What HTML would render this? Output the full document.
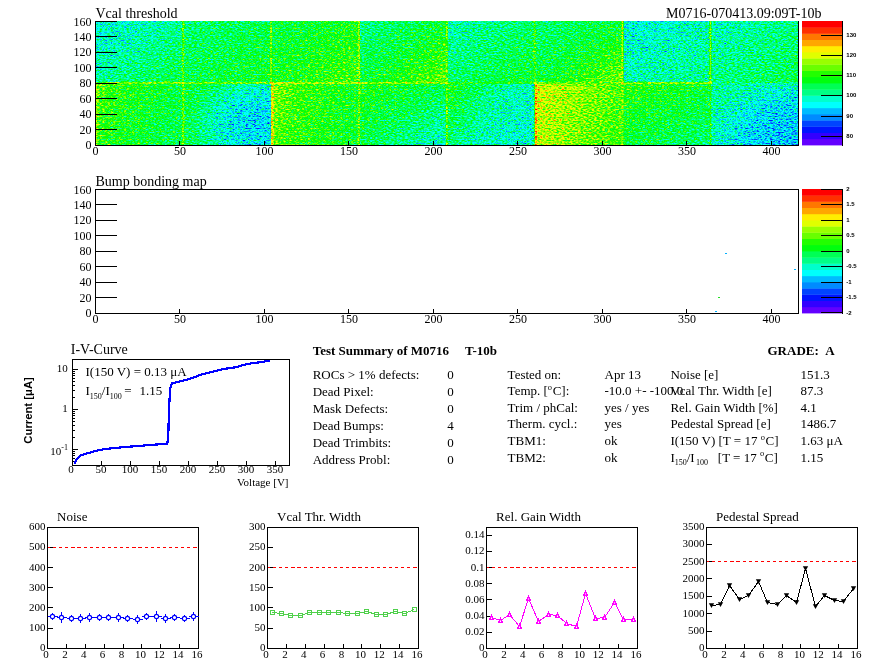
<!DOCTYPE html>
<html><head><meta charset="utf-8"><title>Module test summary</title>
<style>html,body{margin:0;padding:0;background:#fff;}body{width:896px;height:672px;overflow:hidden;font-family:"Liberation Serif", serif;}svg{display:block;opacity:0.999;}text{fill:#000;}</style>
</head><body>
<svg width="896" height="672" viewBox="0 0 896 672">
<rect x="0" y="0" width="896" height="672" fill="#fff"/>
<defs>
<filter id="hm" x="0" y="0" width="1" height="1" color-interpolation-filters="sRGB">
<feTurbulence type="fractalNoise" baseFrequency="0.37 0.74" numOctaves="1" seed="7" result="n"/>
<feColorMatrix in="n" type="matrix" values="1 0 0 0 0  1 0 0 0 0  1 0 0 0 0  0 0 0 0 1" result="ng"/>
<feComposite in="SourceGraphic" in2="ng" operator="arithmetic" k1="0" k2="1" k3="0.660" k4="-0.330" result="v"/>
<feComponentTransfer in="v" result="pal">
<feFuncR type="discrete" tableValues="0.387 0.200 0.000 0.000 0.000 0.000 0.000 0.000 0.000 0.000 0.000 0.133 0.413 0.600 0.880 1.000 1.000 1.000 1.000 1.000"/>
<feFuncG type="discrete" tableValues="0.000 0.000 0.080 0.267 0.547 0.733 1.000 1.000 1.000 1.000 1.000 1.000 1.000 1.000 1.000 0.933 0.653 0.467 0.187 0.000"/>
<feFuncB type="discrete" tableValues="1.000 1.000 1.000 1.000 1.000 1.000 0.987 0.800 0.520 0.333 0.053 0.000 0.000 0.000 0.000 0.000 0.000 0.000 0.000 0.000"/>
<feFuncA type="discrete" tableValues="1 1"/>
</feComponentTransfer>
<feGaussianBlur in="pal" stdDeviation="0.45 0.38" edgeMode="duplicate"/>
</filter>
</defs>
<defs>
<linearGradient id="gt0" x1="0" y1="0" x2="1" y2="1"><stop offset="0" stop-color="#5b5b5b"/><stop offset="0.35" stop-color="#636363"/><stop offset="1" stop-color="#808080"/></linearGradient>
<linearGradient id="gt1" x1="0" y1="0" x2="1" y2="1"><stop offset="0" stop-color="#6f6f6f"/><stop offset="1" stop-color="#868686"/></linearGradient>
<linearGradient id="gt2" x1="0" y1="0" x2="1" y2="1"><stop offset="0" stop-color="#7a7a7a"/><stop offset="1" stop-color="#969696"/></linearGradient>
<linearGradient id="gt3" x1="0" y1="0" x2="1" y2="1"><stop offset="0" stop-color="#6b6b6b"/><stop offset="0.5" stop-color="#808080"/><stop offset="1" stop-color="#9f9f9f"/></linearGradient>
<linearGradient id="gt4" x1="0" y1="0" x2="1" y2="1"><stop offset="0" stop-color="#636363"/><stop offset="1" stop-color="#848484"/></linearGradient>
<linearGradient id="gt5" x1="0" y1="0" x2="1" y2="1"><stop offset="0" stop-color="#6f6f6f"/><stop offset="0.5" stop-color="#808080"/><stop offset="1" stop-color="#a1a1a1"/></linearGradient>
<linearGradient id="gt6" x1="0" y1="0" x2="1" y2="1"><stop offset="0" stop-color="#585858"/><stop offset="1" stop-color="#6d6d6d"/></linearGradient>
<linearGradient id="gt7" x1="0" y1="0" x2="1" y2="1"><stop offset="0" stop-color="#5f5f5f"/><stop offset="1" stop-color="#7c7c7c"/></linearGradient>
<linearGradient id="gb0" x1="0" y1="0" x2="1" y2="0.3"><stop offset="0" stop-color="#9f9f9f"/><stop offset="0.25" stop-color="#8e8e8e"/><stop offset="1" stop-color="#7a7a7a"/></linearGradient>
<linearGradient id="gb1" x1="0" y1="0" x2="1" y2="0.3"><stop offset="0" stop-color="#828282"/><stop offset="0.5" stop-color="#737373"/><stop offset="1" stop-color="#636363"/></linearGradient>
<linearGradient id="gb2" x1="0" y1="0" x2="1" y2="0.2"><stop offset="0" stop-color="#a7a7a7"/><stop offset="0.35" stop-color="#929292"/><stop offset="1" stop-color="#848484"/></linearGradient>
<linearGradient id="gb3" x1="0" y1="0" x2="1" y2="1"><stop offset="0" stop-color="#8c8c8c"/><stop offset="0.5" stop-color="#7a7a7a"/><stop offset="1" stop-color="#5d5d5d"/></linearGradient>
<linearGradient id="gb4" x1="0" y1="0" x2="1" y2="0.45"><stop offset="0" stop-color="#8c8c8c"/><stop offset="0.3" stop-color="#777777"/><stop offset="0.6" stop-color="#656565"/><stop offset="1" stop-color="#5d5d5d"/></linearGradient>
<linearGradient id="gb5" x1="0" y1="0" x2="1" y2="0.2"><stop offset="0" stop-color="#bababa"/><stop offset="1" stop-color="#969696"/></linearGradient>
<linearGradient id="gb6" x1="0" y1="0" x2="1" y2="1"><stop offset="0" stop-color="#909090"/><stop offset="1" stop-color="#717171"/></linearGradient>
<linearGradient id="gb7" x1="0" y1="0" x2="1" y2="1"><stop offset="0" stop-color="#6b6b6b"/><stop offset="0.5" stop-color="#5f5f5f"/><stop offset="1" stop-color="#484848"/></linearGradient>
</defs>
<g filter="url(#hm)">
<rect x="95.50" y="21.00" width="703.00" height="124.00" fill="#757575"/>
<rect x="95.50" y="21.00" width="88.17" height="62.00" fill="url(#gt0)"/>
<rect x="95.50" y="83.00" width="88.17" height="62.00" fill="url(#gb0)"/>
<rect x="183.38" y="21.00" width="88.17" height="62.00" fill="url(#gt1)"/>
<rect x="183.38" y="83.00" width="88.17" height="62.00" fill="url(#gb1)"/>
<rect x="271.25" y="21.00" width="88.17" height="62.00" fill="url(#gt2)"/>
<rect x="271.25" y="83.00" width="88.17" height="62.00" fill="url(#gb2)"/>
<rect x="359.12" y="21.00" width="88.17" height="62.00" fill="url(#gt3)"/>
<rect x="359.12" y="83.00" width="88.17" height="62.00" fill="url(#gb3)"/>
<rect x="447.00" y="21.00" width="88.17" height="62.00" fill="url(#gt4)"/>
<rect x="447.00" y="83.00" width="88.17" height="62.00" fill="url(#gb4)"/>
<rect x="534.88" y="21.00" width="88.17" height="62.00" fill="url(#gt5)"/>
<rect x="534.88" y="83.00" width="88.17" height="62.00" fill="url(#gb5)"/>
<rect x="622.75" y="21.00" width="88.17" height="62.00" fill="url(#gt6)"/>
<rect x="622.75" y="83.00" width="88.17" height="62.00" fill="url(#gb6)"/>
<rect x="710.62" y="21.00" width="88.17" height="62.00" fill="url(#gt7)"/>
<rect x="710.62" y="83.00" width="88.17" height="62.00" fill="url(#gb7)"/>
<radialGradient id="bl1" cx="0.80" cy="0.62" r="0.74"><stop offset="0" stop-color="#484848" stop-opacity="0.88"/><stop offset="0.5" stop-color="#484848" stop-opacity="0.55"/><stop offset="1" stop-color="#484848" stop-opacity="0"/></radialGradient>
<radialGradient id="bl2" cx="0.78" cy="0.72" r="0.72"><stop offset="0" stop-color="#464646" stop-opacity="0.88"/><stop offset="0.5" stop-color="#464646" stop-opacity="0.5"/><stop offset="1" stop-color="#464646" stop-opacity="0"/></radialGradient>
<rect x="183.38" y="83.00" width="87.88" height="62.00" fill="url(#bl1)"/>
<rect x="710.62" y="83.00" width="87.88" height="62.00" fill="url(#bl2)"/>
<rect x="95.30" y="83.00" width="2.0" height="62.00" fill="#ababab"/>
<rect x="182.18" y="21.00" width="2.0" height="62.00" fill="#9b9b9b"/>
<rect x="182.18" y="83.00" width="2.0" height="62.00" fill="#9f9f9f"/>
<rect x="270.05" y="21.00" width="2.0" height="62.00" fill="#9f9f9f"/>
<rect x="271.05" y="83.00" width="2.6" height="62.00" fill="#c2c2c2"/>
<rect x="357.93" y="21.00" width="2.0" height="62.00" fill="#a7a7a7"/>
<rect x="357.93" y="83.00" width="2.0" height="62.00" fill="#9f9f9f"/>
<rect x="445.80" y="21.00" width="2.0" height="62.00" fill="#9f9f9f"/>
<rect x="445.80" y="83.00" width="2.0" height="62.00" fill="#9f9f9f"/>
<rect x="533.67" y="21.00" width="2.0" height="62.00" fill="#969696"/>
<rect x="534.67" y="83.00" width="2.6" height="62.00" fill="#d0d0d0"/>
<rect x="621.55" y="21.00" width="2.0" height="62.00" fill="#afafaf"/>
<rect x="621.55" y="83.00" width="2.0" height="62.00" fill="#a3a3a3"/>
<rect x="709.42" y="21.00" width="2.0" height="62.00" fill="#a3a3a3"/>
<rect x="709.42" y="83.00" width="2.0" height="62.00" fill="#909090"/>
<rect x="95.50" y="82.10" width="87.88" height="1.7" fill="#a9a9a9"/>
<rect x="183.38" y="82.10" width="87.88" height="1.7" fill="#a5a5a5"/>
<rect x="271.25" y="82.10" width="87.88" height="1.7" fill="#b3b3b3"/>
<rect x="359.12" y="82.10" width="87.88" height="1.7" fill="#ababab"/>
<rect x="447.00" y="82.10" width="87.88" height="1.7" fill="#909090"/>
<rect x="534.88" y="82.10" width="87.88" height="1.7" fill="#9b9b9b"/>
<rect x="622.75" y="82.10" width="87.88" height="1.7" fill="#ababab"/>
<rect x="181.88" y="81.80" width="3" height="2.2" fill="#bcbcbc"/>
<rect x="269.75" y="81.80" width="3" height="2.2" fill="#bcbcbc"/>
<rect x="357.62" y="81.80" width="3" height="2.2" fill="#bcbcbc"/>
<rect x="445.50" y="81.80" width="3" height="2.2" fill="#bcbcbc"/>
<rect x="533.38" y="81.80" width="3" height="2.2" fill="#bcbcbc"/>
<rect x="621.25" y="81.80" width="3" height="2.2" fill="#bcbcbc"/>
<rect x="709.12" y="81.80" width="3" height="2.2" fill="#b3b3b3"/>
</g>
<g shape-rendering="crispEdges">
<line x1="95.50" y1="20.50" x2="95.50" y2="145.50" stroke="#000" stroke-width="1" />
<line x1="95.00" y1="145.50" x2="799.00" y2="145.50" stroke="#000" stroke-width="1" />
<line x1="798.50" y1="21.00" x2="798.50" y2="145.50" stroke="#000" stroke-width="1" />
<line x1="95.00" y1="129.50" x2="117.00" y2="129.50" stroke="#000" stroke-width="1" />
<line x1="95.00" y1="114.50" x2="117.00" y2="114.50" stroke="#000" stroke-width="1" />
<line x1="95.00" y1="98.50" x2="117.00" y2="98.50" stroke="#000" stroke-width="1" />
<line x1="95.00" y1="83.50" x2="117.00" y2="83.50" stroke="#000" stroke-width="1" />
<line x1="95.00" y1="67.50" x2="117.00" y2="67.50" stroke="#000" stroke-width="1" />
<line x1="95.00" y1="52.50" x2="117.00" y2="52.50" stroke="#000" stroke-width="1" />
<line x1="95.00" y1="36.50" x2="117.00" y2="36.50" stroke="#000" stroke-width="1" />
<line x1="95.00" y1="21.50" x2="117.00" y2="21.50" stroke="#000" stroke-width="1" />
<line x1="179.50" y1="141.00" x2="179.50" y2="145.00" stroke="#000" stroke-width="1" />
<line x1="264.50" y1="141.00" x2="264.50" y2="145.00" stroke="#000" stroke-width="1" />
<line x1="348.50" y1="141.00" x2="348.50" y2="145.00" stroke="#000" stroke-width="1" />
<line x1="433.50" y1="141.00" x2="433.50" y2="145.00" stroke="#000" stroke-width="1" />
<line x1="517.50" y1="141.00" x2="517.50" y2="145.00" stroke="#000" stroke-width="1" />
<line x1="602.50" y1="141.00" x2="602.50" y2="145.00" stroke="#000" stroke-width="1" />
<line x1="686.50" y1="141.00" x2="686.50" y2="145.00" stroke="#000" stroke-width="1" />
<line x1="771.50" y1="141.00" x2="771.50" y2="145.00" stroke="#000" stroke-width="1" />
</g>
<text x="91.50" y="149.30" font-size="12" text-anchor="end" font-family='"Liberation Serif", serif' font-weight="normal" >0</text>
<text x="91.50" y="133.80" font-size="12" text-anchor="end" font-family='"Liberation Serif", serif' font-weight="normal" >20</text>
<text x="91.50" y="118.30" font-size="12" text-anchor="end" font-family='"Liberation Serif", serif' font-weight="normal" >40</text>
<text x="91.50" y="102.80" font-size="12" text-anchor="end" font-family='"Liberation Serif", serif' font-weight="normal" >60</text>
<text x="91.50" y="87.30" font-size="12" text-anchor="end" font-family='"Liberation Serif", serif' font-weight="normal" >80</text>
<text x="91.50" y="71.80" font-size="12" text-anchor="end" font-family='"Liberation Serif", serif' font-weight="normal" >100</text>
<text x="91.50" y="56.30" font-size="12" text-anchor="end" font-family='"Liberation Serif", serif' font-weight="normal" >120</text>
<text x="91.50" y="40.80" font-size="12" text-anchor="end" font-family='"Liberation Serif", serif' font-weight="normal" >140</text>
<text x="91.50" y="26.10" font-size="12" text-anchor="end" font-family='"Liberation Serif", serif' font-weight="normal" >160</text>
<text x="95.50" y="154.50" font-size="12" text-anchor="middle" font-family='"Liberation Serif", serif' font-weight="normal" >0</text>
<text x="180.00" y="154.50" font-size="12" text-anchor="middle" font-family='"Liberation Serif", serif' font-weight="normal" >50</text>
<text x="264.49" y="154.50" font-size="12" text-anchor="middle" font-family='"Liberation Serif", serif' font-weight="normal" >100</text>
<text x="348.99" y="154.50" font-size="12" text-anchor="middle" font-family='"Liberation Serif", serif' font-weight="normal" >150</text>
<text x="433.48" y="154.50" font-size="12" text-anchor="middle" font-family='"Liberation Serif", serif' font-weight="normal" >200</text>
<text x="517.98" y="154.50" font-size="12" text-anchor="middle" font-family='"Liberation Serif", serif' font-weight="normal" >250</text>
<text x="602.47" y="154.50" font-size="12" text-anchor="middle" font-family='"Liberation Serif", serif' font-weight="normal" >300</text>
<text x="686.97" y="154.50" font-size="12" text-anchor="middle" font-family='"Liberation Serif", serif' font-weight="normal" >350</text>
<text x="771.46" y="154.50" font-size="12" text-anchor="middle" font-family='"Liberation Serif", serif' font-weight="normal" >400</text>
<text x="95.50" y="17.70" font-size="14" text-anchor="start" font-family='"Liberation Serif", serif' font-weight="normal" >Vcal threshold</text>
<text x="821.50" y="17.70" font-size="14" text-anchor="end" font-family='"Liberation Serif", serif' font-weight="normal" >M0716-070413.09:09T-10b</text>
<rect x="802.00" y="138.80" width="40.00" height="6.60" fill="#6300ff"/>
<rect x="802.00" y="132.60" width="40.00" height="6.60" fill="#3300ff"/>
<rect x="802.00" y="126.40" width="40.00" height="6.60" fill="#0014ff"/>
<rect x="802.00" y="120.20" width="40.00" height="6.60" fill="#0044ff"/>
<rect x="802.00" y="114.00" width="40.00" height="6.60" fill="#008bff"/>
<rect x="802.00" y="107.80" width="40.00" height="6.60" fill="#00bbff"/>
<rect x="802.00" y="101.60" width="40.00" height="6.60" fill="#00fffc"/>
<rect x="802.00" y="95.40" width="40.00" height="6.60" fill="#00ffcc"/>
<rect x="802.00" y="89.20" width="40.00" height="6.60" fill="#00ff85"/>
<rect x="802.00" y="83.00" width="40.00" height="6.60" fill="#00ff55"/>
<rect x="802.00" y="76.80" width="40.00" height="6.60" fill="#00ff0e"/>
<rect x="802.00" y="70.60" width="40.00" height="6.60" fill="#22ff00"/>
<rect x="802.00" y="64.40" width="40.00" height="6.60" fill="#69ff00"/>
<rect x="802.00" y="58.20" width="40.00" height="6.60" fill="#99ff00"/>
<rect x="802.00" y="52.00" width="40.00" height="6.60" fill="#e0ff00"/>
<rect x="802.00" y="45.80" width="40.00" height="6.60" fill="#ffee00"/>
<rect x="802.00" y="39.60" width="40.00" height="6.60" fill="#ffa700"/>
<rect x="802.00" y="33.40" width="40.00" height="6.60" fill="#ff7700"/>
<rect x="802.00" y="27.20" width="40.00" height="6.60" fill="#ff3000"/>
<rect x="802.00" y="21.00" width="40.00" height="6.60" fill="#ff0000"/>
<g shape-rendering="crispEdges">
<line x1="842.50" y1="21.00" x2="842.50" y2="145.50" stroke="#000" stroke-width="1" />
<line x1="821.00" y1="136.50" x2="843.00" y2="136.50" stroke="#000" stroke-width="1" />
<line x1="821.00" y1="116.50" x2="843.00" y2="116.50" stroke="#000" stroke-width="1" />
<line x1="821.00" y1="95.50" x2="843.00" y2="95.50" stroke="#000" stroke-width="1" />
<line x1="821.00" y1="75.50" x2="843.00" y2="75.50" stroke="#000" stroke-width="1" />
<line x1="821.00" y1="55.50" x2="843.00" y2="55.50" stroke="#000" stroke-width="1" />
<line x1="821.00" y1="35.50" x2="843.00" y2="35.50" stroke="#000" stroke-width="1" />
</g>
<text x="846.30" y="137.66" font-size="6" text-anchor="start" font-family='"Liberation Sans", sans-serif' font-weight="bold" >80</text>
<text x="846.30" y="117.56" font-size="6" text-anchor="start" font-family='"Liberation Sans", sans-serif' font-weight="bold" >90</text>
<text x="846.30" y="97.46" font-size="6" text-anchor="start" font-family='"Liberation Sans", sans-serif' font-weight="bold" >100</text>
<text x="846.30" y="77.37" font-size="6" text-anchor="start" font-family='"Liberation Sans", sans-serif' font-weight="bold" >110</text>
<text x="846.30" y="57.27" font-size="6" text-anchor="start" font-family='"Liberation Sans", sans-serif' font-weight="bold" >120</text>
<text x="846.30" y="37.17" font-size="6" text-anchor="start" font-family='"Liberation Sans", sans-serif' font-weight="bold" >130</text>
<g shape-rendering="crispEdges">
<rect x="95.5" y="189.5" width="703" height="124" fill="none" stroke="#000" stroke-width="1"/>
<line x1="95.00" y1="297.50" x2="117.00" y2="297.50" stroke="#000" stroke-width="1" />
<line x1="95.00" y1="282.50" x2="117.00" y2="282.50" stroke="#000" stroke-width="1" />
<line x1="95.00" y1="266.50" x2="117.00" y2="266.50" stroke="#000" stroke-width="1" />
<line x1="95.00" y1="251.50" x2="117.00" y2="251.50" stroke="#000" stroke-width="1" />
<line x1="95.00" y1="235.50" x2="117.00" y2="235.50" stroke="#000" stroke-width="1" />
<line x1="95.00" y1="220.50" x2="117.00" y2="220.50" stroke="#000" stroke-width="1" />
<line x1="95.00" y1="204.50" x2="117.00" y2="204.50" stroke="#000" stroke-width="1" />
<line x1="179.50" y1="309.00" x2="179.50" y2="313.00" stroke="#000" stroke-width="1" />
<line x1="264.50" y1="309.00" x2="264.50" y2="313.00" stroke="#000" stroke-width="1" />
<line x1="348.50" y1="309.00" x2="348.50" y2="313.00" stroke="#000" stroke-width="1" />
<line x1="433.50" y1="309.00" x2="433.50" y2="313.00" stroke="#000" stroke-width="1" />
<line x1="517.50" y1="309.00" x2="517.50" y2="313.00" stroke="#000" stroke-width="1" />
<line x1="602.50" y1="309.00" x2="602.50" y2="313.00" stroke="#000" stroke-width="1" />
<line x1="686.50" y1="309.00" x2="686.50" y2="313.00" stroke="#000" stroke-width="1" />
<line x1="771.50" y1="309.00" x2="771.50" y2="313.00" stroke="#000" stroke-width="1" />
</g>
<text x="91.50" y="317.30" font-size="12" text-anchor="end" font-family='"Liberation Serif", serif' font-weight="normal" >0</text>
<text x="91.50" y="301.80" font-size="12" text-anchor="end" font-family='"Liberation Serif", serif' font-weight="normal" >20</text>
<text x="91.50" y="286.30" font-size="12" text-anchor="end" font-family='"Liberation Serif", serif' font-weight="normal" >40</text>
<text x="91.50" y="270.80" font-size="12" text-anchor="end" font-family='"Liberation Serif", serif' font-weight="normal" >60</text>
<text x="91.50" y="255.30" font-size="12" text-anchor="end" font-family='"Liberation Serif", serif' font-weight="normal" >80</text>
<text x="91.50" y="239.80" font-size="12" text-anchor="end" font-family='"Liberation Serif", serif' font-weight="normal" >100</text>
<text x="91.50" y="224.30" font-size="12" text-anchor="end" font-family='"Liberation Serif", serif' font-weight="normal" >120</text>
<text x="91.50" y="208.80" font-size="12" text-anchor="end" font-family='"Liberation Serif", serif' font-weight="normal" >140</text>
<text x="91.50" y="194.10" font-size="12" text-anchor="end" font-family='"Liberation Serif", serif' font-weight="normal" >160</text>
<text x="95.50" y="322.60" font-size="12" text-anchor="middle" font-family='"Liberation Serif", serif' font-weight="normal" >0</text>
<text x="180.00" y="322.60" font-size="12" text-anchor="middle" font-family='"Liberation Serif", serif' font-weight="normal" >50</text>
<text x="264.49" y="322.60" font-size="12" text-anchor="middle" font-family='"Liberation Serif", serif' font-weight="normal" >100</text>
<text x="348.99" y="322.60" font-size="12" text-anchor="middle" font-family='"Liberation Serif", serif' font-weight="normal" >150</text>
<text x="433.48" y="322.60" font-size="12" text-anchor="middle" font-family='"Liberation Serif", serif' font-weight="normal" >200</text>
<text x="517.98" y="322.60" font-size="12" text-anchor="middle" font-family='"Liberation Serif", serif' font-weight="normal" >250</text>
<text x="602.47" y="322.60" font-size="12" text-anchor="middle" font-family='"Liberation Serif", serif' font-weight="normal" >300</text>
<text x="686.97" y="322.60" font-size="12" text-anchor="middle" font-family='"Liberation Serif", serif' font-weight="normal" >350</text>
<text x="771.46" y="322.60" font-size="12" text-anchor="middle" font-family='"Liberation Serif", serif' font-weight="normal" >400</text>
<text x="95.50" y="185.70" font-size="14" text-anchor="start" font-family='"Liberation Serif", serif' font-weight="normal" >Bump bonding map</text>
<g shape-rendering="crispEdges">
<rect x="725" y="253" width="2" height="1" fill="#00b0ff"/>
<rect x="794" y="269" width="2" height="1" fill="#00b0ff"/>
<rect x="718" y="297" width="2" height="1" fill="#22e022"/>
<rect x="715" y="311" width="2" height="1" fill="#00b0ff"/>
</g>
<rect x="802.00" y="306.80" width="40.00" height="6.60" fill="#6300ff"/>
<rect x="802.00" y="300.60" width="40.00" height="6.60" fill="#3300ff"/>
<rect x="802.00" y="294.40" width="40.00" height="6.60" fill="#0014ff"/>
<rect x="802.00" y="288.20" width="40.00" height="6.60" fill="#0044ff"/>
<rect x="802.00" y="282.00" width="40.00" height="6.60" fill="#008bff"/>
<rect x="802.00" y="275.80" width="40.00" height="6.60" fill="#00bbff"/>
<rect x="802.00" y="269.60" width="40.00" height="6.60" fill="#00fffc"/>
<rect x="802.00" y="263.40" width="40.00" height="6.60" fill="#00ffcc"/>
<rect x="802.00" y="257.20" width="40.00" height="6.60" fill="#00ff85"/>
<rect x="802.00" y="251.00" width="40.00" height="6.60" fill="#00ff55"/>
<rect x="802.00" y="244.80" width="40.00" height="6.60" fill="#00ff0e"/>
<rect x="802.00" y="238.60" width="40.00" height="6.60" fill="#22ff00"/>
<rect x="802.00" y="232.40" width="40.00" height="6.60" fill="#69ff00"/>
<rect x="802.00" y="226.20" width="40.00" height="6.60" fill="#99ff00"/>
<rect x="802.00" y="220.00" width="40.00" height="6.60" fill="#e0ff00"/>
<rect x="802.00" y="213.80" width="40.00" height="6.60" fill="#ffee00"/>
<rect x="802.00" y="207.60" width="40.00" height="6.60" fill="#ffa700"/>
<rect x="802.00" y="201.40" width="40.00" height="6.60" fill="#ff7700"/>
<rect x="802.00" y="195.20" width="40.00" height="6.60" fill="#ff3000"/>
<rect x="802.00" y="189.00" width="40.00" height="6.60" fill="#ff0000"/>
<g shape-rendering="crispEdges">
<line x1="842.50" y1="189.00" x2="842.50" y2="313.50" stroke="#000" stroke-width="1" />
<line x1="821.00" y1="312.50" x2="843.00" y2="312.50" stroke="#000" stroke-width="1" />
<line x1="821.00" y1="297.50" x2="843.00" y2="297.50" stroke="#000" stroke-width="1" />
<line x1="821.00" y1="282.50" x2="843.00" y2="282.50" stroke="#000" stroke-width="1" />
<line x1="821.00" y1="266.50" x2="843.00" y2="266.50" stroke="#000" stroke-width="1" />
<line x1="821.00" y1="251.50" x2="843.00" y2="251.50" stroke="#000" stroke-width="1" />
<line x1="821.00" y1="235.50" x2="843.00" y2="235.50" stroke="#000" stroke-width="1" />
<line x1="821.00" y1="220.50" x2="843.00" y2="220.50" stroke="#000" stroke-width="1" />
<line x1="821.00" y1="204.50" x2="843.00" y2="204.50" stroke="#000" stroke-width="1" />
<line x1="821.00" y1="189.50" x2="843.00" y2="189.50" stroke="#000" stroke-width="1" />
</g>
<text x="846.30" y="314.50" font-size="6" text-anchor="start" font-family='"Liberation Sans", sans-serif' font-weight="bold" >-2</text>
<text x="846.30" y="299.00" font-size="6" text-anchor="start" font-family='"Liberation Sans", sans-serif' font-weight="bold" >-1.5</text>
<text x="846.30" y="283.50" font-size="6" text-anchor="start" font-family='"Liberation Sans", sans-serif' font-weight="bold" >-1</text>
<text x="846.30" y="268.00" font-size="6" text-anchor="start" font-family='"Liberation Sans", sans-serif' font-weight="bold" >-0.5</text>
<text x="846.30" y="252.50" font-size="6" text-anchor="start" font-family='"Liberation Sans", sans-serif' font-weight="bold" >0</text>
<text x="846.30" y="237.00" font-size="6" text-anchor="start" font-family='"Liberation Sans", sans-serif' font-weight="bold" >0.5</text>
<text x="846.30" y="221.50" font-size="6" text-anchor="start" font-family='"Liberation Sans", sans-serif' font-weight="bold" >1</text>
<text x="846.30" y="206.00" font-size="6" text-anchor="start" font-family='"Liberation Sans", sans-serif' font-weight="bold" >1.5</text>
<text x="846.30" y="190.50" font-size="6" text-anchor="start" font-family='"Liberation Sans", sans-serif' font-weight="bold" >2</text>
<g shape-rendering="crispEdges">
<rect x="72.5" y="359.5" width="217.0" height="106.0" fill="none" stroke="#000"/>
<line x1="72.00" y1="461.50" x2="75.00" y2="461.50" stroke="#000" stroke-width="1" />
<line x1="72.00" y1="458.50" x2="75.00" y2="458.50" stroke="#000" stroke-width="1" />
<line x1="72.00" y1="455.50" x2="75.00" y2="455.50" stroke="#000" stroke-width="1" />
<line x1="72.00" y1="453.50" x2="75.00" y2="453.50" stroke="#000" stroke-width="1" />
<line x1="72.00" y1="451.50" x2="75.00" y2="451.50" stroke="#000" stroke-width="1" />
<line x1="72.00" y1="449.50" x2="78.00" y2="449.50" stroke="#000" stroke-width="1" />
<line x1="72.00" y1="437.50" x2="75.00" y2="437.50" stroke="#000" stroke-width="1" />
<line x1="72.00" y1="430.50" x2="75.00" y2="430.50" stroke="#000" stroke-width="1" />
<line x1="72.00" y1="425.50" x2="75.00" y2="425.50" stroke="#000" stroke-width="1" />
<line x1="72.00" y1="421.50" x2="75.00" y2="421.50" stroke="#000" stroke-width="1" />
<line x1="72.00" y1="418.50" x2="75.00" y2="418.50" stroke="#000" stroke-width="1" />
<line x1="72.00" y1="415.50" x2="75.00" y2="415.50" stroke="#000" stroke-width="1" />
<line x1="72.00" y1="413.50" x2="75.00" y2="413.50" stroke="#000" stroke-width="1" />
<line x1="72.00" y1="411.50" x2="75.00" y2="411.50" stroke="#000" stroke-width="1" />
<line x1="72.00" y1="409.50" x2="78.00" y2="409.50" stroke="#000" stroke-width="1" />
<line x1="72.00" y1="397.50" x2="75.00" y2="397.50" stroke="#000" stroke-width="1" />
<line x1="72.00" y1="390.50" x2="75.00" y2="390.50" stroke="#000" stroke-width="1" />
<line x1="72.00" y1="385.50" x2="75.00" y2="385.50" stroke="#000" stroke-width="1" />
<line x1="72.00" y1="381.50" x2="75.00" y2="381.50" stroke="#000" stroke-width="1" />
<line x1="72.00" y1="378.50" x2="75.00" y2="378.50" stroke="#000" stroke-width="1" />
<line x1="72.00" y1="375.50" x2="75.00" y2="375.50" stroke="#000" stroke-width="1" />
<line x1="72.00" y1="373.50" x2="75.00" y2="373.50" stroke="#000" stroke-width="1" />
<line x1="72.00" y1="371.50" x2="75.00" y2="371.50" stroke="#000" stroke-width="1" />
<line x1="72.00" y1="369.50" x2="78.00" y2="369.50" stroke="#000" stroke-width="1" />
<line x1="101.50" y1="461.00" x2="101.50" y2="465.00" stroke="#000" stroke-width="1" />
<line x1="130.50" y1="461.00" x2="130.50" y2="465.00" stroke="#000" stroke-width="1" />
<line x1="159.50" y1="461.00" x2="159.50" y2="465.00" stroke="#000" stroke-width="1" />
<line x1="188.50" y1="461.00" x2="188.50" y2="465.00" stroke="#000" stroke-width="1" />
<line x1="217.50" y1="461.00" x2="217.50" y2="465.00" stroke="#000" stroke-width="1" />
<line x1="246.50" y1="461.00" x2="246.50" y2="465.00" stroke="#000" stroke-width="1" />
<line x1="275.50" y1="461.00" x2="275.50" y2="465.00" stroke="#000" stroke-width="1" />
</g>
<text x="70.90" y="473.40" font-size="11" text-anchor="middle" font-family='"Liberation Serif", serif' font-weight="normal" >0</text>
<text x="100.90" y="473.40" font-size="11" text-anchor="middle" font-family='"Liberation Serif", serif' font-weight="normal" >50</text>
<text x="129.90" y="473.40" font-size="11" text-anchor="middle" font-family='"Liberation Serif", serif' font-weight="normal" >100</text>
<text x="158.90" y="473.40" font-size="11" text-anchor="middle" font-family='"Liberation Serif", serif' font-weight="normal" >150</text>
<text x="187.90" y="473.40" font-size="11" text-anchor="middle" font-family='"Liberation Serif", serif' font-weight="normal" >200</text>
<text x="216.90" y="473.40" font-size="11" text-anchor="middle" font-family='"Liberation Serif", serif' font-weight="normal" >250</text>
<text x="245.90" y="473.40" font-size="11" text-anchor="middle" font-family='"Liberation Serif", serif' font-weight="normal" >300</text>
<text x="274.90" y="473.40" font-size="11" text-anchor="middle" font-family='"Liberation Serif", serif' font-weight="normal" >350</text>
<text x="67.80" y="371.90" font-size="11" text-anchor="end" font-family='"Liberation Serif", serif' font-weight="normal" >10</text>
<text x="67.80" y="412.00" font-size="11" text-anchor="end" font-family='"Liberation Serif", serif' font-weight="normal" >1</text>
<text x="68" y="454.70" font-size="11" text-anchor="end" font-family='"Liberation Serif", serif'>10<tspan font-size="8" dy="-4.5">-1</tspan></text>
<text x="70.80" y="354.40" font-size="14" text-anchor="start" font-family='"Liberation Serif", serif' font-weight="normal" >I-V-Curve</text>
<text x="288.50" y="486.30" font-size="11" text-anchor="end" font-family='"Liberation Serif", serif' font-weight="normal" >Voltage [V]</text>
<text transform="translate(31.6,410.4) rotate(-90)" font-size="11.3" text-anchor="middle" font-weight="bold" font-family='"Liberation Sans", sans-serif'>Current [μA]</text>
<text x="85.50" y="375.60" font-size="13" text-anchor="start" font-family='"Liberation Serif", serif' font-weight="normal" >I(150 V) = 0.13 μA</text>
<text x="85.5" y="395.4" font-size="13" font-family='"Liberation Serif", serif'>I<tspan font-size="8" dy="3.2">150</tspan><tspan dy="-3.2">/I</tspan><tspan font-size="8" dy="3.2">100</tspan><tspan dy="-3.2" dx="2.5">=</tspan><tspan x="139.4">1.15</tspan></text>
<polyline shape-rendering="crispEdges" fill="none" stroke="#0000ff" stroke-width="2.2" stroke-linejoin="round" stroke-linecap="round" points="74.8,462.8 76.8,459.0 81.1,455.1 88.8,452.9 95.7,450.8 104.2,449.1 112.8,448.2 124.7,447.0 138.4,446.0 147.0,445.2 159.0,444.3 165.8,443.6 167.3,444.3 168.3,435.4 169.0,408.0 170.2,389.2 171.7,383.5 177.1,382.0 189.1,379.0 201.1,374.7 211.3,372.1 223.3,369.0 235.3,367.3 247.3,363.9 259.2,362.4 269.2,360.6"/>
<text x="312.70" y="355.10" font-size="13" text-anchor="start" font-family='"Liberation Serif", serif' font-weight="bold" >Test Summary of M0716</text>
<text x="465.00" y="355.10" font-size="13" text-anchor="start" font-family='"Liberation Serif", serif' font-weight="bold" >T-10b</text>
<text x="767.50" y="355.10" font-size="13" text-anchor="start" font-family='"Liberation Serif", serif' font-weight="bold" >GRADE:</text>
<text x="825.30" y="355.10" font-size="13" text-anchor="start" font-family='"Liberation Serif", serif' font-weight="bold" >A</text>
<text x="312.70" y="378.80" font-size="13" text-anchor="start" font-family='"Liberation Serif", serif' font-weight="normal" >ROCs &gt; 1% defects:</text>
<text x="447.20" y="378.80" font-size="13" text-anchor="start" font-family='"Liberation Serif", serif' font-weight="normal" >0</text>
<text x="312.70" y="395.80" font-size="13" text-anchor="start" font-family='"Liberation Serif", serif' font-weight="normal" >Dead Pixel:</text>
<text x="447.20" y="395.80" font-size="13" text-anchor="start" font-family='"Liberation Serif", serif' font-weight="normal" >0</text>
<text x="312.70" y="412.80" font-size="13" text-anchor="start" font-family='"Liberation Serif", serif' font-weight="normal" >Mask Defects:</text>
<text x="447.20" y="412.80" font-size="13" text-anchor="start" font-family='"Liberation Serif", serif' font-weight="normal" >0</text>
<text x="312.70" y="429.80" font-size="13" text-anchor="start" font-family='"Liberation Serif", serif' font-weight="normal" >Dead Bumps:</text>
<text x="447.20" y="429.80" font-size="13" text-anchor="start" font-family='"Liberation Serif", serif' font-weight="normal" >4</text>
<text x="312.70" y="446.80" font-size="13" text-anchor="start" font-family='"Liberation Serif", serif' font-weight="normal" >Dead Trimbits:</text>
<text x="447.20" y="446.80" font-size="13" text-anchor="start" font-family='"Liberation Serif", serif' font-weight="normal" >0</text>
<text x="312.70" y="463.80" font-size="13" text-anchor="start" font-family='"Liberation Serif", serif' font-weight="normal" >Address Probl:</text>
<text x="447.20" y="463.80" font-size="13" text-anchor="start" font-family='"Liberation Serif", serif' font-weight="normal" >0</text>
<text x="507.60" y="378.60" font-size="13" text-anchor="start" font-family='"Liberation Serif", serif' font-weight="normal" >Tested on:</text>
<text x="604.50" y="378.60" font-size="13" text-anchor="start" font-family='"Liberation Serif", serif' font-weight="normal" >Apr 13</text>
<text x="670.40" y="378.60" font-size="13" text-anchor="start" font-family='"Liberation Serif", serif' font-weight="normal" xml:space="preserve">Noise [e]</text>
<text x="800.60" y="378.60" font-size="13" text-anchor="start" font-family='"Liberation Serif", serif' font-weight="normal" >151.3</text>
<text x="507.60" y="395.20" font-size="13" text-anchor="start" font-family='"Liberation Serif", serif' font-weight="normal" >Temp. [<tspan font-size="8.5" dy="-5.2">o</tspan><tspan dy="5.2" dx="0.6">C]</tspan>:</text>
<text x="604.50" y="395.20" font-size="13" text-anchor="start" font-family='"Liberation Serif", serif' font-weight="normal" >-10.0 +- -100.0</text>
<text x="670.40" y="395.20" font-size="13" text-anchor="start" font-family='"Liberation Serif", serif' font-weight="normal" xml:space="preserve">Vcal Thr. Width [e]</text>
<text x="800.60" y="395.20" font-size="13" text-anchor="start" font-family='"Liberation Serif", serif' font-weight="normal" >87.3</text>
<text x="507.60" y="411.80" font-size="13" text-anchor="start" font-family='"Liberation Serif", serif' font-weight="normal" >Trim / phCal:</text>
<text x="604.50" y="411.80" font-size="13" text-anchor="start" font-family='"Liberation Serif", serif' font-weight="normal" >yes / yes</text>
<text x="670.40" y="411.80" font-size="13" text-anchor="start" font-family='"Liberation Serif", serif' font-weight="normal" xml:space="preserve">Rel. Gain Width [%]</text>
<text x="800.60" y="411.80" font-size="13" text-anchor="start" font-family='"Liberation Serif", serif' font-weight="normal" >4.1</text>
<text x="507.60" y="428.40" font-size="13" text-anchor="start" font-family='"Liberation Serif", serif' font-weight="normal" >Therm. cycl.:</text>
<text x="604.50" y="428.40" font-size="13" text-anchor="start" font-family='"Liberation Serif", serif' font-weight="normal" >yes</text>
<text x="670.40" y="428.40" font-size="13" text-anchor="start" font-family='"Liberation Serif", serif' font-weight="normal" xml:space="preserve">Pedestal Spread [e]</text>
<text x="800.60" y="428.40" font-size="13" text-anchor="start" font-family='"Liberation Serif", serif' font-weight="normal" >1486.7</text>
<text x="507.60" y="445.00" font-size="13" text-anchor="start" font-family='"Liberation Serif", serif' font-weight="normal" >TBM1:</text>
<text x="604.50" y="445.00" font-size="13" text-anchor="start" font-family='"Liberation Serif", serif' font-weight="normal" >ok</text>
<text x="670.40" y="445.00" font-size="13" text-anchor="start" font-family='"Liberation Serif", serif' font-weight="normal" xml:space="preserve">I(150 V) [T = 17 <tspan font-size="8.5" dy="-5.2">o</tspan><tspan dy="5.2" dx="0.6">C]</tspan></text>
<text x="800.60" y="445.00" font-size="13" text-anchor="start" font-family='"Liberation Serif", serif' font-weight="normal" >1.63 μA</text>
<text x="507.60" y="461.60" font-size="13" text-anchor="start" font-family='"Liberation Serif", serif' font-weight="normal" >TBM2:</text>
<text x="604.50" y="461.60" font-size="13" text-anchor="start" font-family='"Liberation Serif", serif' font-weight="normal" >ok</text>
<text x="670.40" y="461.60" font-size="13" text-anchor="start" font-family='"Liberation Serif", serif' font-weight="normal" xml:space="preserve">I<tspan font-size="8" dy="3.2">150</tspan><tspan dy="-3.2">/I</tspan><tspan font-size="8" dy="3.2" dx="1.2">100</tspan><tspan dy="-3.2" x="717.8">[T = 17 </tspan><tspan font-size="8.5" dy="-5.2">o</tspan><tspan dy="5.2" dx="0.6">C]</tspan></text>
<text x="800.60" y="461.60" font-size="13" text-anchor="start" font-family='"Liberation Serif", serif' font-weight="normal" >1.15</text>
<g shape-rendering="crispEdges">
<rect x="47.5" y="527.5" width="151" height="121.0" fill="none" stroke="#000"/>
<line x1="47.50" y1="628.50" x2="52.50" y2="628.50" stroke="#000" stroke-width="1" />
<line x1="47.50" y1="607.50" x2="52.50" y2="607.50" stroke="#000" stroke-width="1" />
<line x1="47.50" y1="587.50" x2="52.50" y2="587.50" stroke="#000" stroke-width="1" />
<line x1="47.50" y1="567.50" x2="52.50" y2="567.50" stroke="#000" stroke-width="1" />
<line x1="47.50" y1="547.50" x2="52.50" y2="547.50" stroke="#000" stroke-width="1" />
<line x1="66.50" y1="644.00" x2="66.50" y2="648.00" stroke="#000" stroke-width="1" />
<line x1="85.50" y1="644.00" x2="85.50" y2="648.00" stroke="#000" stroke-width="1" />
<line x1="104.50" y1="644.00" x2="104.50" y2="648.00" stroke="#000" stroke-width="1" />
<line x1="123.50" y1="644.00" x2="123.50" y2="648.00" stroke="#000" stroke-width="1" />
<line x1="141.50" y1="644.00" x2="141.50" y2="648.00" stroke="#000" stroke-width="1" />
<line x1="160.50" y1="644.00" x2="160.50" y2="648.00" stroke="#000" stroke-width="1" />
<line x1="179.50" y1="644.00" x2="179.50" y2="648.00" stroke="#000" stroke-width="1" />
</g>
<text x="45.50" y="651.20" font-size="11" text-anchor="end" font-family='"Liberation Serif", serif' font-weight="normal" >0</text>
<text x="45.50" y="631.03" font-size="11" text-anchor="end" font-family='"Liberation Serif", serif' font-weight="normal" >100</text>
<text x="45.50" y="610.87" font-size="11" text-anchor="end" font-family='"Liberation Serif", serif' font-weight="normal" >200</text>
<text x="45.50" y="590.70" font-size="11" text-anchor="end" font-family='"Liberation Serif", serif' font-weight="normal" >300</text>
<text x="45.50" y="570.53" font-size="11" text-anchor="end" font-family='"Liberation Serif", serif' font-weight="normal" >400</text>
<text x="45.50" y="550.37" font-size="11" text-anchor="end" font-family='"Liberation Serif", serif' font-weight="normal" >500</text>
<text x="45.50" y="530.20" font-size="11" text-anchor="end" font-family='"Liberation Serif", serif' font-weight="normal" >600</text>
<text x="46.00" y="658.00" font-size="11" text-anchor="middle" font-family='"Liberation Serif", serif' font-weight="normal" >0</text>
<text x="64.88" y="658.00" font-size="11" text-anchor="middle" font-family='"Liberation Serif", serif' font-weight="normal" >2</text>
<text x="83.75" y="658.00" font-size="11" text-anchor="middle" font-family='"Liberation Serif", serif' font-weight="normal" >4</text>
<text x="102.62" y="658.00" font-size="11" text-anchor="middle" font-family='"Liberation Serif", serif' font-weight="normal" >6</text>
<text x="121.50" y="658.00" font-size="11" text-anchor="middle" font-family='"Liberation Serif", serif' font-weight="normal" >8</text>
<text x="140.38" y="658.00" font-size="11" text-anchor="middle" font-family='"Liberation Serif", serif' font-weight="normal" >10</text>
<text x="159.25" y="658.00" font-size="11" text-anchor="middle" font-family='"Liberation Serif", serif' font-weight="normal" >12</text>
<text x="178.12" y="658.00" font-size="11" text-anchor="middle" font-family='"Liberation Serif", serif' font-weight="normal" >14</text>
<text x="197.00" y="658.00" font-size="11" text-anchor="middle" font-family='"Liberation Serif", serif' font-weight="normal" >16</text>
<text x="57.10" y="520.50" font-size="13" text-anchor="start" font-family='"Liberation Serif", serif' font-weight="normal" >Noise</text>
<line x1="53.0" y1="547.5" x2="198.5" y2="547.5" stroke="#ff0000" stroke-width="1" stroke-dasharray="3.2,2.9" shape-rendering="crispEdges"/>
<line x1="47.50" y1="547.50" x2="49.50" y2="547.50" stroke="#ff0000" stroke-width="1" shape-rendering="crispEdges"/>
<g stroke="#0000ff" stroke-width="1" fill="none">
<path shape-rendering="crispEdges" d="M47.5 616.5H50.5M54.5 616.5H57.5M52.5 613.0V614.5M52.5 618.5V620.0"/>
<circle cx="52.5" cy="616.5" r="2.1" fill="#fff" stroke-width="1.15"/>
<path shape-rendering="crispEdges" d="M56.5 617.5H59.5M63.5 617.5H66.5M61.5 612.0V615.5M61.5 619.5V623.0"/>
<circle cx="61.5" cy="617.5" r="2.1" fill="#fff" stroke-width="1.15"/>
<path shape-rendering="crispEdges" d="M66.5 618.5H69.5M73.5 618.5H76.5M71.5 615.0V616.5M71.5 620.5V622.0"/>
<circle cx="71.5" cy="618.5" r="2.1" fill="#fff" stroke-width="1.15"/>
<path shape-rendering="crispEdges" d="M75.5 618.5H78.5M82.5 618.5H85.5M80.5 614.0V616.5M80.5 620.5V623.0"/>
<circle cx="80.5" cy="618.5" r="2.1" fill="#fff" stroke-width="1.15"/>
<path shape-rendering="crispEdges" d="M84.5 617.5H87.5M91.5 617.5H94.5M89.5 613.0V615.5M89.5 619.5V622.0"/>
<circle cx="89.5" cy="617.5" r="2.1" fill="#fff" stroke-width="1.15"/>
<path shape-rendering="crispEdges" d="M94.5 617.5H97.5M101.5 617.5H104.5M99.5 614.0V615.5M99.5 619.5V621.0"/>
<circle cx="99.5" cy="617.5" r="2.1" fill="#fff" stroke-width="1.15"/>
<path shape-rendering="crispEdges" d="M103.5 617.5H106.5M110.5 617.5H113.5M108.5 614.0V615.5M108.5 619.5V621.0"/>
<circle cx="108.5" cy="617.5" r="2.1" fill="#fff" stroke-width="1.15"/>
<path shape-rendering="crispEdges" d="M113.5 617.5H116.5M120.5 617.5H123.5M118.5 613.0V615.5M118.5 619.5V622.0"/>
<circle cx="118.5" cy="617.5" r="2.1" fill="#fff" stroke-width="1.15"/>
<path shape-rendering="crispEdges" d="M122.5 618.5H125.5M129.5 618.5H132.5M127.5 615.0V616.5M127.5 620.5V622.0"/>
<circle cx="127.5" cy="618.5" r="2.1" fill="#fff" stroke-width="1.15"/>
<path shape-rendering="crispEdges" d="M132.5 619.5H135.5M139.5 619.5H142.5M137.5 615.0V617.5M137.5 621.5V624.0"/>
<circle cx="137.5" cy="619.5" r="2.1" fill="#fff" stroke-width="1.15"/>
<path shape-rendering="crispEdges" d="M141.5 616.5H144.5M148.5 616.5H151.5M146.5 613.0V614.5M146.5 618.5V620.0"/>
<circle cx="146.5" cy="616.5" r="2.1" fill="#fff" stroke-width="1.15"/>
<path shape-rendering="crispEdges" d="M151.5 616.5H154.5M158.5 616.5H161.5M156.5 611.0V614.5M156.5 618.5V622.0"/>
<circle cx="156.5" cy="616.5" r="2.1" fill="#fff" stroke-width="1.15"/>
<path shape-rendering="crispEdges" d="M160.5 618.5H163.5M167.5 618.5H170.5M165.5 614.0V616.5M165.5 620.5V623.0"/>
<circle cx="165.5" cy="618.5" r="2.1" fill="#fff" stroke-width="1.15"/>
<path shape-rendering="crispEdges" d="M169.5 617.5H172.5M176.5 617.5H179.5M174.5 614.0V615.5M174.5 619.5V621.0"/>
<circle cx="174.5" cy="617.5" r="2.1" fill="#fff" stroke-width="1.15"/>
<path shape-rendering="crispEdges" d="M179.5 618.5H182.5M186.5 618.5H189.5M184.5 615.0V616.5M184.5 620.5V622.0"/>
<circle cx="184.5" cy="618.5" r="2.1" fill="#fff" stroke-width="1.15"/>
<path shape-rendering="crispEdges" d="M188.5 616.5H191.5M195.5 616.5H198.5M193.5 612.0V614.5M193.5 618.5V621.0"/>
<circle cx="193.5" cy="616.5" r="2.1" fill="#fff" stroke-width="1.15"/>
</g>
<g shape-rendering="crispEdges">
<rect x="267.5" y="527.5" width="151" height="121.0" fill="none" stroke="#000"/>
<line x1="267.50" y1="628.50" x2="272.50" y2="628.50" stroke="#000" stroke-width="1" />
<line x1="267.50" y1="607.50" x2="272.50" y2="607.50" stroke="#000" stroke-width="1" />
<line x1="267.50" y1="587.50" x2="272.50" y2="587.50" stroke="#000" stroke-width="1" />
<line x1="267.50" y1="567.50" x2="272.50" y2="567.50" stroke="#000" stroke-width="1" />
<line x1="267.50" y1="547.50" x2="272.50" y2="547.50" stroke="#000" stroke-width="1" />
<line x1="286.50" y1="644.00" x2="286.50" y2="648.00" stroke="#000" stroke-width="1" />
<line x1="305.50" y1="644.00" x2="305.50" y2="648.00" stroke="#000" stroke-width="1" />
<line x1="324.50" y1="644.00" x2="324.50" y2="648.00" stroke="#000" stroke-width="1" />
<line x1="343.50" y1="644.00" x2="343.50" y2="648.00" stroke="#000" stroke-width="1" />
<line x1="361.50" y1="644.00" x2="361.50" y2="648.00" stroke="#000" stroke-width="1" />
<line x1="380.50" y1="644.00" x2="380.50" y2="648.00" stroke="#000" stroke-width="1" />
<line x1="399.50" y1="644.00" x2="399.50" y2="648.00" stroke="#000" stroke-width="1" />
</g>
<text x="265.50" y="651.20" font-size="11" text-anchor="end" font-family='"Liberation Serif", serif' font-weight="normal" >0</text>
<text x="265.50" y="631.03" font-size="11" text-anchor="end" font-family='"Liberation Serif", serif' font-weight="normal" >50</text>
<text x="265.50" y="610.87" font-size="11" text-anchor="end" font-family='"Liberation Serif", serif' font-weight="normal" >100</text>
<text x="265.50" y="590.70" font-size="11" text-anchor="end" font-family='"Liberation Serif", serif' font-weight="normal" >150</text>
<text x="265.50" y="570.53" font-size="11" text-anchor="end" font-family='"Liberation Serif", serif' font-weight="normal" >200</text>
<text x="265.50" y="550.37" font-size="11" text-anchor="end" font-family='"Liberation Serif", serif' font-weight="normal" >250</text>
<text x="265.50" y="530.20" font-size="11" text-anchor="end" font-family='"Liberation Serif", serif' font-weight="normal" >300</text>
<text x="266.00" y="658.00" font-size="11" text-anchor="middle" font-family='"Liberation Serif", serif' font-weight="normal" >0</text>
<text x="284.88" y="658.00" font-size="11" text-anchor="middle" font-family='"Liberation Serif", serif' font-weight="normal" >2</text>
<text x="303.75" y="658.00" font-size="11" text-anchor="middle" font-family='"Liberation Serif", serif' font-weight="normal" >4</text>
<text x="322.62" y="658.00" font-size="11" text-anchor="middle" font-family='"Liberation Serif", serif' font-weight="normal" >6</text>
<text x="341.50" y="658.00" font-size="11" text-anchor="middle" font-family='"Liberation Serif", serif' font-weight="normal" >8</text>
<text x="360.38" y="658.00" font-size="11" text-anchor="middle" font-family='"Liberation Serif", serif' font-weight="normal" >10</text>
<text x="379.25" y="658.00" font-size="11" text-anchor="middle" font-family='"Liberation Serif", serif' font-weight="normal" >12</text>
<text x="398.12" y="658.00" font-size="11" text-anchor="middle" font-family='"Liberation Serif", serif' font-weight="normal" >14</text>
<text x="417.00" y="658.00" font-size="11" text-anchor="middle" font-family='"Liberation Serif", serif' font-weight="normal" >16</text>
<text x="277.10" y="520.50" font-size="13" text-anchor="start" font-family='"Liberation Serif", serif' font-weight="normal" >Vcal Thr. Width</text>
<line x1="273.0" y1="567.5" x2="418.5" y2="567.5" stroke="#ff0000" stroke-width="1" stroke-dasharray="3.2,2.9" shape-rendering="crispEdges"/>
<line x1="267.50" y1="567.50" x2="269.50" y2="567.50" stroke="#ff0000" stroke-width="1" shape-rendering="crispEdges"/>
<g stroke="#4fd04b" stroke-width="1" fill="none">
<polyline shape-rendering="crispEdges" points="272.5,612.5 281.5,613.5 290.5,615.5 300.5,615.5 309.5,612.5 319.5,612.5 328.5,612.5 338.5,612.5 347.5,613.5 357.5,613.5 366.5,611.5 376.5,614.5 385.5,614.5 395.5,611.5 404.5,613.5 414.5,609.5"/>
<rect shape-rendering="crispEdges" x="270.5" y="610.5" width="4" height="4"/>
<rect shape-rendering="crispEdges" x="279.5" y="611.5" width="4" height="4"/>
<rect shape-rendering="crispEdges" x="288.5" y="613.5" width="4" height="4"/>
<rect shape-rendering="crispEdges" x="298.5" y="613.5" width="4" height="4"/>
<rect shape-rendering="crispEdges" x="307.5" y="610.5" width="4" height="4"/>
<rect shape-rendering="crispEdges" x="317.5" y="610.5" width="4" height="4"/>
<rect shape-rendering="crispEdges" x="326.5" y="610.5" width="4" height="4"/>
<rect shape-rendering="crispEdges" x="336.5" y="610.5" width="4" height="4"/>
<rect shape-rendering="crispEdges" x="345.5" y="611.5" width="4" height="4"/>
<rect shape-rendering="crispEdges" x="355.5" y="611.5" width="4" height="4"/>
<rect shape-rendering="crispEdges" x="364.5" y="609.5" width="4" height="4"/>
<rect shape-rendering="crispEdges" x="374.5" y="612.5" width="4" height="4"/>
<rect shape-rendering="crispEdges" x="383.5" y="612.5" width="4" height="4"/>
<rect shape-rendering="crispEdges" x="393.5" y="609.5" width="4" height="4"/>
<rect shape-rendering="crispEdges" x="402.5" y="611.5" width="4" height="4"/>
<rect shape-rendering="crispEdges" x="412.5" y="607.5" width="4" height="4"/>
</g>
<g shape-rendering="crispEdges">
<rect x="486.5" y="527.5" width="151" height="121.0" fill="none" stroke="#000"/>
<line x1="486.50" y1="632.50" x2="491.50" y2="632.50" stroke="#000" stroke-width="1" />
<line x1="486.50" y1="616.50" x2="491.50" y2="616.50" stroke="#000" stroke-width="1" />
<line x1="486.50" y1="599.50" x2="491.50" y2="599.50" stroke="#000" stroke-width="1" />
<line x1="486.50" y1="583.50" x2="491.50" y2="583.50" stroke="#000" stroke-width="1" />
<line x1="486.50" y1="567.50" x2="491.50" y2="567.50" stroke="#000" stroke-width="1" />
<line x1="486.50" y1="551.50" x2="491.50" y2="551.50" stroke="#000" stroke-width="1" />
<line x1="486.50" y1="535.50" x2="491.50" y2="535.50" stroke="#000" stroke-width="1" />
<line x1="505.50" y1="644.00" x2="505.50" y2="648.00" stroke="#000" stroke-width="1" />
<line x1="524.50" y1="644.00" x2="524.50" y2="648.00" stroke="#000" stroke-width="1" />
<line x1="543.50" y1="644.00" x2="543.50" y2="648.00" stroke="#000" stroke-width="1" />
<line x1="562.50" y1="644.00" x2="562.50" y2="648.00" stroke="#000" stroke-width="1" />
<line x1="580.50" y1="644.00" x2="580.50" y2="648.00" stroke="#000" stroke-width="1" />
<line x1="599.50" y1="644.00" x2="599.50" y2="648.00" stroke="#000" stroke-width="1" />
<line x1="618.50" y1="644.00" x2="618.50" y2="648.00" stroke="#000" stroke-width="1" />
</g>
<text x="484.50" y="651.20" font-size="11" text-anchor="end" font-family='"Liberation Serif", serif' font-weight="normal" >0</text>
<text x="484.50" y="635.07" font-size="11" text-anchor="end" font-family='"Liberation Serif", serif' font-weight="normal" >0.02</text>
<text x="484.50" y="618.93" font-size="11" text-anchor="end" font-family='"Liberation Serif", serif' font-weight="normal" >0.04</text>
<text x="484.50" y="602.80" font-size="11" text-anchor="end" font-family='"Liberation Serif", serif' font-weight="normal" >0.06</text>
<text x="484.50" y="586.67" font-size="11" text-anchor="end" font-family='"Liberation Serif", serif' font-weight="normal" >0.08</text>
<text x="484.50" y="570.53" font-size="11" text-anchor="end" font-family='"Liberation Serif", serif' font-weight="normal" >0.1</text>
<text x="484.50" y="554.40" font-size="11" text-anchor="end" font-family='"Liberation Serif", serif' font-weight="normal" >0.12</text>
<text x="484.50" y="538.27" font-size="11" text-anchor="end" font-family='"Liberation Serif", serif' font-weight="normal" >0.14</text>
<text x="485.00" y="658.00" font-size="11" text-anchor="middle" font-family='"Liberation Serif", serif' font-weight="normal" >0</text>
<text x="503.88" y="658.00" font-size="11" text-anchor="middle" font-family='"Liberation Serif", serif' font-weight="normal" >2</text>
<text x="522.75" y="658.00" font-size="11" text-anchor="middle" font-family='"Liberation Serif", serif' font-weight="normal" >4</text>
<text x="541.62" y="658.00" font-size="11" text-anchor="middle" font-family='"Liberation Serif", serif' font-weight="normal" >6</text>
<text x="560.50" y="658.00" font-size="11" text-anchor="middle" font-family='"Liberation Serif", serif' font-weight="normal" >8</text>
<text x="579.38" y="658.00" font-size="11" text-anchor="middle" font-family='"Liberation Serif", serif' font-weight="normal" >10</text>
<text x="598.25" y="658.00" font-size="11" text-anchor="middle" font-family='"Liberation Serif", serif' font-weight="normal" >12</text>
<text x="617.12" y="658.00" font-size="11" text-anchor="middle" font-family='"Liberation Serif", serif' font-weight="normal" >14</text>
<text x="636.00" y="658.00" font-size="11" text-anchor="middle" font-family='"Liberation Serif", serif' font-weight="normal" >16</text>
<text x="496.10" y="520.50" font-size="13" text-anchor="start" font-family='"Liberation Serif", serif' font-weight="normal" >Rel. Gain Width</text>
<line x1="492.0" y1="567.5" x2="637.5" y2="567.5" stroke="#ff0000" stroke-width="1" stroke-dasharray="3.2,2.9" shape-rendering="crispEdges"/>
<line x1="486.50" y1="567.50" x2="488.50" y2="567.50" stroke="#ff0000" stroke-width="1" shape-rendering="crispEdges"/>
<g stroke="#ff00ff" stroke-width="1" fill="none" shape-rendering="crispEdges">
<polyline points="491.5,617.5 500.5,620.5 509.5,614.5 519.5,626.5 528.5,598.5 538.5,621.5 548.5,614.5 557.5,615.5 566.5,623.5 576.5,626.5 585.5,593.5 595.5,618.5 604.5,617.5 614.5,602.5 623.5,619.5 633.5,619.5"/>
<path d="M489.5 619.5L493.5 619.5L491.5 615.5Z" fill="#fff" fill-opacity="0.55"/>
<path d="M498.5 622.5L502.5 622.5L500.5 618.5Z" fill="#fff" fill-opacity="0.55"/>
<path d="M507.5 616.5L511.5 616.5L509.5 612.5Z" fill="#fff" fill-opacity="0.55"/>
<path d="M517.5 628.5L521.5 628.5L519.5 624.5Z" fill="#fff" fill-opacity="0.55"/>
<path d="M526.5 600.5L530.5 600.5L528.5 596.5Z" fill="#fff" fill-opacity="0.55"/>
<path d="M536.5 623.5L540.5 623.5L538.5 619.5Z" fill="#fff" fill-opacity="0.55"/>
<path d="M546.5 616.5L550.5 616.5L548.5 612.5Z" fill="#fff" fill-opacity="0.55"/>
<path d="M555.5 617.5L559.5 617.5L557.5 613.5Z" fill="#fff" fill-opacity="0.55"/>
<path d="M564.5 625.5L568.5 625.5L566.5 621.5Z" fill="#fff" fill-opacity="0.55"/>
<path d="M574.5 628.5L578.5 628.5L576.5 624.5Z" fill="#fff" fill-opacity="0.55"/>
<path d="M583.5 595.5L587.5 595.5L585.5 591.5Z" fill="#fff" fill-opacity="0.55"/>
<path d="M593.5 620.5L597.5 620.5L595.5 616.5Z" fill="#fff" fill-opacity="0.55"/>
<path d="M602.5 619.5L606.5 619.5L604.5 615.5Z" fill="#fff" fill-opacity="0.55"/>
<path d="M612.5 604.5L616.5 604.5L614.5 600.5Z" fill="#fff" fill-opacity="0.55"/>
<path d="M621.5 621.5L625.5 621.5L623.5 617.5Z" fill="#fff" fill-opacity="0.55"/>
<path d="M631.5 621.5L635.5 621.5L633.5 617.5Z" fill="#fff" fill-opacity="0.55"/>
</g>
<g shape-rendering="crispEdges">
<rect x="706.5" y="527.5" width="151" height="121.0" fill="none" stroke="#000"/>
<line x1="706.50" y1="631.50" x2="711.50" y2="631.50" stroke="#000" stroke-width="1" />
<line x1="706.50" y1="613.50" x2="711.50" y2="613.50" stroke="#000" stroke-width="1" />
<line x1="706.50" y1="596.50" x2="711.50" y2="596.50" stroke="#000" stroke-width="1" />
<line x1="706.50" y1="578.50" x2="711.50" y2="578.50" stroke="#000" stroke-width="1" />
<line x1="706.50" y1="561.50" x2="711.50" y2="561.50" stroke="#000" stroke-width="1" />
<line x1="706.50" y1="544.50" x2="711.50" y2="544.50" stroke="#000" stroke-width="1" />
<line x1="725.50" y1="644.00" x2="725.50" y2="648.00" stroke="#000" stroke-width="1" />
<line x1="744.50" y1="644.00" x2="744.50" y2="648.00" stroke="#000" stroke-width="1" />
<line x1="763.50" y1="644.00" x2="763.50" y2="648.00" stroke="#000" stroke-width="1" />
<line x1="782.50" y1="644.00" x2="782.50" y2="648.00" stroke="#000" stroke-width="1" />
<line x1="800.50" y1="644.00" x2="800.50" y2="648.00" stroke="#000" stroke-width="1" />
<line x1="819.50" y1="644.00" x2="819.50" y2="648.00" stroke="#000" stroke-width="1" />
<line x1="838.50" y1="644.00" x2="838.50" y2="648.00" stroke="#000" stroke-width="1" />
</g>
<text x="704.50" y="651.20" font-size="11" text-anchor="end" font-family='"Liberation Serif", serif' font-weight="normal" >0</text>
<text x="704.50" y="633.91" font-size="11" text-anchor="end" font-family='"Liberation Serif", serif' font-weight="normal" >500</text>
<text x="704.50" y="616.63" font-size="11" text-anchor="end" font-family='"Liberation Serif", serif' font-weight="normal" >1000</text>
<text x="704.50" y="599.34" font-size="11" text-anchor="end" font-family='"Liberation Serif", serif' font-weight="normal" >1500</text>
<text x="704.50" y="582.06" font-size="11" text-anchor="end" font-family='"Liberation Serif", serif' font-weight="normal" >2000</text>
<text x="704.50" y="564.77" font-size="11" text-anchor="end" font-family='"Liberation Serif", serif' font-weight="normal" >2500</text>
<text x="704.50" y="547.49" font-size="11" text-anchor="end" font-family='"Liberation Serif", serif' font-weight="normal" >3000</text>
<text x="704.50" y="530.20" font-size="11" text-anchor="end" font-family='"Liberation Serif", serif' font-weight="normal" >3500</text>
<text x="705.00" y="658.00" font-size="11" text-anchor="middle" font-family='"Liberation Serif", serif' font-weight="normal" >0</text>
<text x="723.88" y="658.00" font-size="11" text-anchor="middle" font-family='"Liberation Serif", serif' font-weight="normal" >2</text>
<text x="742.75" y="658.00" font-size="11" text-anchor="middle" font-family='"Liberation Serif", serif' font-weight="normal" >4</text>
<text x="761.62" y="658.00" font-size="11" text-anchor="middle" font-family='"Liberation Serif", serif' font-weight="normal" >6</text>
<text x="780.50" y="658.00" font-size="11" text-anchor="middle" font-family='"Liberation Serif", serif' font-weight="normal" >8</text>
<text x="799.38" y="658.00" font-size="11" text-anchor="middle" font-family='"Liberation Serif", serif' font-weight="normal" >10</text>
<text x="818.25" y="658.00" font-size="11" text-anchor="middle" font-family='"Liberation Serif", serif' font-weight="normal" >12</text>
<text x="837.12" y="658.00" font-size="11" text-anchor="middle" font-family='"Liberation Serif", serif' font-weight="normal" >14</text>
<text x="856.00" y="658.00" font-size="11" text-anchor="middle" font-family='"Liberation Serif", serif' font-weight="normal" >16</text>
<text x="716.10" y="520.50" font-size="13" text-anchor="start" font-family='"Liberation Serif", serif' font-weight="normal" >Pedestal Spread</text>
<line x1="712.0" y1="561.5" x2="857.5" y2="561.5" stroke="#ff0000" stroke-width="1" stroke-dasharray="3.2,2.9" shape-rendering="crispEdges"/>
<line x1="706.50" y1="561.50" x2="708.50" y2="561.50" stroke="#ff0000" stroke-width="1" shape-rendering="crispEdges"/>
<g stroke="#000" stroke-width="1" fill="none" shape-rendering="crispEdges">
<polyline points="711.5,605.5 720.5,604.5 729.5,585.5 739.5,599.5 748.5,595.5 758.5,581.5 767.5,602.5 777.5,604.5 786.5,595.5 796.5,602.5 805.5,568.5 815.5,606.5 824.5,595.5 834.5,600.5 843.5,601.5 853.5,588.5"/>
<path shape-rendering="geometricPrecision" d="M708.8 603.3L714.2 603.3L711.5 608.0Z" fill="#000" stroke="none"/>
<path shape-rendering="geometricPrecision" d="M717.8 602.3L723.2 602.3L720.5 607.0Z" fill="#000" stroke="none"/>
<path shape-rendering="geometricPrecision" d="M726.8 583.3L732.2 583.3L729.5 588.0Z" fill="#000" stroke="none"/>
<path shape-rendering="geometricPrecision" d="M736.8 597.3L742.2 597.3L739.5 602.0Z" fill="#000" stroke="none"/>
<path shape-rendering="geometricPrecision" d="M745.8 593.3L751.2 593.3L748.5 598.0Z" fill="#000" stroke="none"/>
<path shape-rendering="geometricPrecision" d="M755.8 579.3L761.2 579.3L758.5 584.0Z" fill="#000" stroke="none"/>
<path shape-rendering="geometricPrecision" d="M764.8 600.3L770.2 600.3L767.5 605.0Z" fill="#000" stroke="none"/>
<path shape-rendering="geometricPrecision" d="M774.8 602.3L780.2 602.3L777.5 607.0Z" fill="#000" stroke="none"/>
<path shape-rendering="geometricPrecision" d="M783.8 593.3L789.2 593.3L786.5 598.0Z" fill="#000" stroke="none"/>
<path shape-rendering="geometricPrecision" d="M793.8 600.3L799.2 600.3L796.5 605.0Z" fill="#000" stroke="none"/>
<path shape-rendering="geometricPrecision" d="M802.8 566.3L808.2 566.3L805.5 571.0Z" fill="#000" stroke="none"/>
<path shape-rendering="geometricPrecision" d="M812.8 604.3L818.2 604.3L815.5 609.0Z" fill="#000" stroke="none"/>
<path shape-rendering="geometricPrecision" d="M821.8 593.3L827.2 593.3L824.5 598.0Z" fill="#000" stroke="none"/>
<path shape-rendering="geometricPrecision" d="M831.8 598.3L837.2 598.3L834.5 603.0Z" fill="#000" stroke="none"/>
<path shape-rendering="geometricPrecision" d="M840.8 599.3L846.2 599.3L843.5 604.0Z" fill="#000" stroke="none"/>
<path shape-rendering="geometricPrecision" d="M850.8 586.3L856.2 586.3L853.5 591.0Z" fill="#000" stroke="none"/>
</g>
</svg>
</body></html>
